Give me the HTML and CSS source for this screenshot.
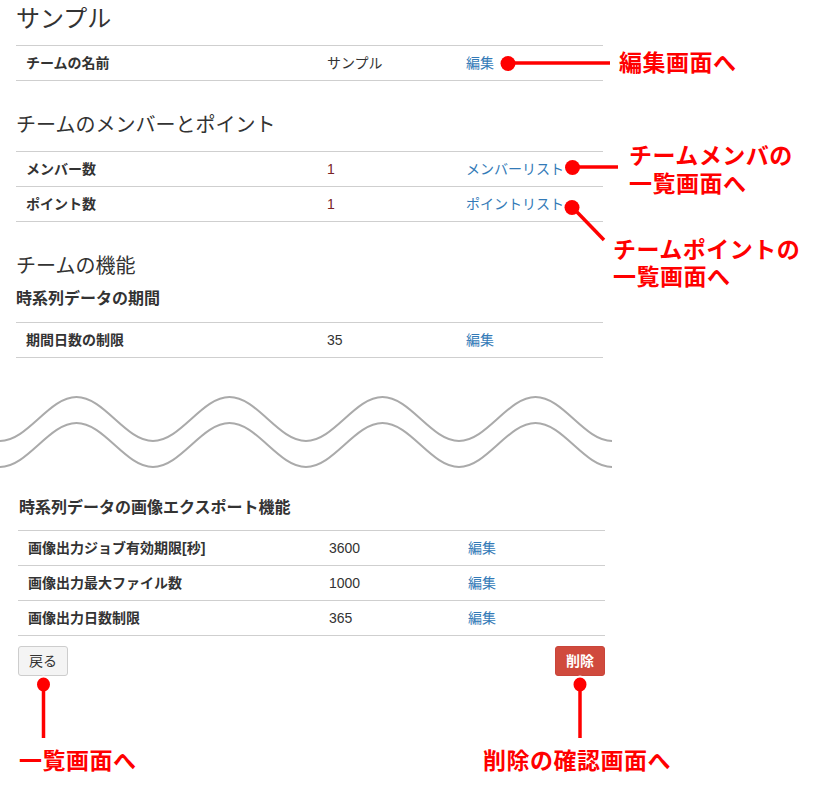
FILE: index.html
```html
<!DOCTYPE html>
<html lang="ja">
<head>
<meta charset="utf-8">
<title>サンプル</title>
<link rel="stylesheet" href="styles.css">
</head>
<body>
<div class="page">
  <div class="upper">
    <h1 class="title">サンプル</h1>
    <div class="table">
      <div class="row"><div class="cell label">チームの名前</div><div class="cell value">サンプル</div><div class="cell action"><a href="#">編集</a></div></div>
    </div>

    <h2 class="section-title">チームのメンバーとポイント</h2>
    <div class="table">
      <div class="row"><div class="cell label">メンバー数</div><div class="cell value count">1</div><div class="cell action"><a href="#">メンバーリスト</a></div></div>
      <div class="row"><div class="cell label">ポイント数</div><div class="cell value count">1</div><div class="cell action"><a href="#">ポイントリスト</a></div></div>
    </div>

    <h2 class="section-title features">チームの機能</h2>
    <h3 class="sub-title">時系列データの期間</h3>
    <div class="table">
      <div class="row"><div class="cell label">期間日数の制限</div><div class="cell value">35</div><div class="cell action"><a href="#">編集</a></div></div>
    </div>
  </div>

  <div class="wave">
    <svg width="612" height="76" viewBox="0 0 612 76">
      <path d="M0,47 C27.8,47 48.7,3 76.5,3 S125.2,47 153,47 S201.7,3 229.5,3 S278.2,47 306,47 S354.7,3 382.5,3 S431.2,47 459,47 S507.7,3 535.5,3 S584.2,47 612,47" fill="none" stroke="#aaa" stroke-width="2"/>
      <path d="M0,73 C27.8,73 48.7,29 76.5,29 S125.2,73 153,73 S201.7,29 229.5,29 S278.2,73 306,73 S354.7,29 382.5,29 S431.2,73 459,73 S507.7,29 535.5,29 S584.2,73 612,73" fill="none" stroke="#aaa" stroke-width="2"/>
    </svg>
  </div>

  <div class="lower">
    <h3 class="sub-title export">時系列データの画像エクスポート機能</h3>
    <div class="table">
      <div class="row"><div class="cell label">画像出力ジョブ有効期限[秒]</div><div class="cell value">3600</div><div class="cell action"><a href="#">編集</a></div></div>
      <div class="row"><div class="cell label">画像出力最大ファイル数</div><div class="cell value">1000</div><div class="cell action"><a href="#">編集</a></div></div>
      <div class="row"><div class="cell label">画像出力日数制限</div><div class="cell value">365</div><div class="cell action"><a href="#">編集</a></div></div>
    </div>
    <div class="buttons">
      <button class="btn btn-default">戻る</button>
      <button class="btn btn-danger">削除</button>
    </div>
  </div>

  <svg class="marks" width="819" height="788" viewBox="0 0 819 788">
    <circle cx="508" cy="63.5" r="7.5" fill="#f00"/>
    <line x1="514" y1="63" x2="610" y2="63" stroke="#f00" stroke-width="3.5"/>
    <circle cx="572.5" cy="167.5" r="7.5" fill="#f00"/>
    <line x1="578" y1="167" x2="618" y2="167" stroke="#f00" stroke-width="3.5"/>
    <circle cx="572" cy="207.5" r="7.5" fill="#f00"/>
    <line x1="577" y1="212" x2="604" y2="240" stroke="#f00" stroke-width="3.5"/>
    <ellipse cx="43.5" cy="684.5" rx="7.5" ry="8" fill="#f00" stroke="#fff" stroke-width="2"/>
    <line x1="43.5" y1="690" x2="43.5" y2="738" stroke="#f00" stroke-width="3.5"/>
    <ellipse cx="580" cy="684.5" rx="7.5" ry="8" fill="#f00" stroke="#fff" stroke-width="2"/>
    <line x1="580" y1="690" x2="580" y2="738" stroke="#f00" stroke-width="3.5"/>
  </svg>

  <div class="note note-edit">編集画面へ</div>
  <div class="note note-members"><div class="note-line">チームメンバの</div><div class="note-line">一覧画面へ</div></div>
  <div class="note note-points"><div class="note-line">チームポイントの</div><div class="note-line">一覧画面へ</div></div>
  <div class="note note-back">一覧画面へ</div>
  <div class="note note-delete">削除の確認画面へ</div>
</div>
</body>
</html>
```

FILE: styles.css
```css
html, body {
  margin: 0;
  padding: 0;
  background: #fff;
}

body {
  font-family: "Liberation Sans", "Noto Sans CJK JP", sans-serif;
  font-size: 14px;
  color: #333;
}

.page {
  position: relative;
  width: 819px;
  height: 788px;
  overflow: hidden;
}

.upper {
  padding-left: 16px;
  width: 587px;
}

.lower {
  padding-left: 18px;
  width: 587px;
}

.title {
  margin: 4px 0 11px;
  font-size: 24px;
  line-height: 30px;
  font-weight: 400;
}

.section-title {
  margin: 29px 0 11px;
  font-size: 20px;
  line-height: 30px;
  font-weight: 400;
}

.section-title.features {
  margin-bottom: 6px;
}

.sub-title {
  margin: 0 0 11px;
  font-size: 16px;
  line-height: 24px;
  font-weight: 700;
}

.sub-title.export {
  margin: 26px 0 10px;
  padding-left: 1px;
}

.table {
  border-bottom: 1px solid #cfcfcf;
}

.row {
  display: grid;
  grid-template-columns: 301px 139px 1fr;
  height: 34px;
  border-top: 1px solid #cfcfcf;
}

.cell {
  padding-left: 10px;
  line-height: 34px;
  white-space: nowrap;
}

.label {
  font-weight: 700;
}

.count {
  color: #7a2424;
}

.action a {
  color: #337ab7;
  text-decoration: none;
}

.wave {
  margin-top: 36px;
  height: 76px;
}

.wave svg {
  display: block;
}

.buttons {
  display: flex;
  justify-content: space-between;
  margin-top: 10px;
}

.btn {
  width: 50px;
  height: 30px;
  padding: 0;
  font-family: "Liberation Sans", "Noto Sans CJK JP", sans-serif;
  font-size: 14px;
  line-height: 28px;
  border-radius: 3px;
  text-align: center;
}

.btn-default {
  background: #f4f4f4;
  border: 1px solid #cdcdcd;
  color: #333;
}

.btn-danger {
  background: #d04a3d;
  border: 1px solid #c9443a;
  color: #fff;
  font-weight: 700;
}

.marks {
  position: absolute;
  left: 0;
  top: 0;
  pointer-events: none;
}

.note {
  position: absolute;
  font-family: "Noto Sans CJK JP", sans-serif;
  font-weight: 700;
  font-size: 23px;
  line-height: 28px;
  letter-spacing: 0.5px;
  color: #f00;
  white-space: nowrap;
}

.note-line {
  height: 28px;
}

.note-edit {
  left: 619px;
  top: 47px;
}

.note-members {
  left: 629px;
  top: 140px;
}

.note-points {
  left: 613px;
  top: 234px;
}

.note-points .note-line {
  height: 27px;
}

.note-back {
  left: 19px;
  top: 745px;
}

.note-delete {
  left: 483px;
  top: 745px;
}
```
